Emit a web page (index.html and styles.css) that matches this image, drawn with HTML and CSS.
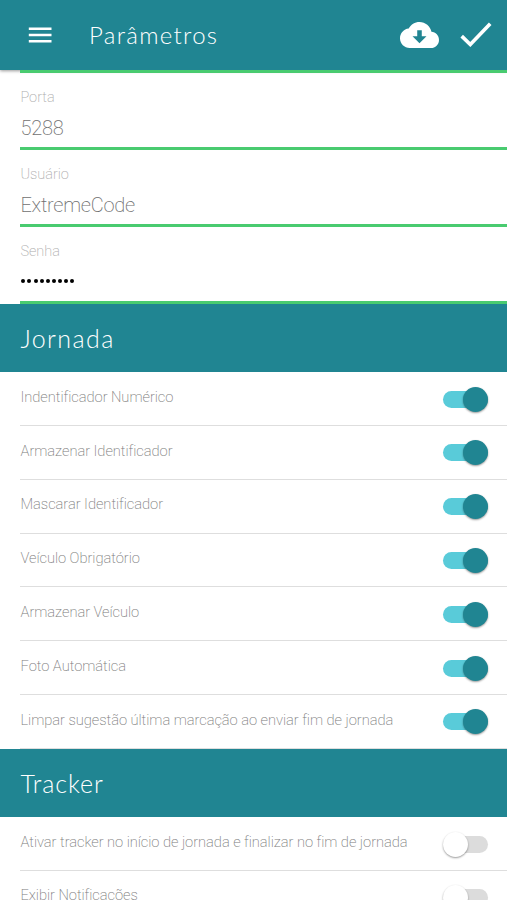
FILE: index.html
```html
<!DOCTYPE html>
<html lang="pt-BR">
<head>
<meta charset="utf-8">
<title>Parâmetros</title>
<link rel="stylesheet" href="styles.css">
</head>
<body>
<header class="toolbar">
  <svg class="menu" viewBox="0 0 24 16"><path d="M0.8 1.7h22.7M0.8 8h22.7M0.8 14.3h22.7" stroke="currentColor" stroke-width="2.5"/></svg>
  <h1 class="title">Parâmetros</h1>
  <svg class="cloud" viewBox="0 4 24 16"><path fill="currentColor" d="M19.35 10.04C18.67 6.59 15.64 4 12 4 9.11 4 6.6 5.64 5.35 8.04 2.34 8.36 0 10.91 0 14c0 3.31 2.69 6 6 6h13c2.76 0 5-2.24 5-5 0-2.64-2.05-4.78-4.65-4.96zM16.3 12.7L12 17.1l-4.3-4.4h2.9V9h2.8v3.7h2.9z"/></svg>
  <svg class="check" viewBox="0 0 32 25"><path d="M1.7 14.1l8.6 8.4L30.2 1.7" fill="none" stroke="currentColor" stroke-width="3.6"/></svg>
</header>
<main>
  <section class="fields">
    <div class="field"><span class="caption">Porta</span><span class="value">5288</span></div>
    <div class="field"><span class="caption">Usuário</span><span class="value">ExtremeCode</span></div>
    <div class="field"><span class="caption">Senha</span><span class="dots"><i></i><i></i><i></i><i></i><i></i><i></i><i></i><i></i><i></i></span></div>
  </section>
  <h2 class="band">Jornada</h2>
  <section class="list">
    <div class="row"><span class="label">Indentificador Numérico</span><span class="switch on"></span></div>
    <div class="row"><span class="label">Armazenar Identificador</span><span class="switch on"></span></div>
    <div class="row"><span class="label">Mascarar Identificador</span><span class="switch on"></span></div>
    <div class="row"><span class="label">Veículo Obrigatório</span><span class="switch on"></span></div>
    <div class="row"><span class="label">Armazenar Veículo</span><span class="switch on"></span></div>
    <div class="row"><span class="label">Foto Automática</span><span class="switch on"></span></div>
    <div class="row"><span class="label">Limpar sugestão última marcação ao enviar fim de jornada</span><span class="switch on"></span></div>
  </section>
  <h2 class="band tracker">Tracker</h2>
  <section class="list">
    <div class="row"><span class="label">Ativar tracker no início de jornada e finalizar no fim de jornada</span><span class="switch"></span></div>
    <div class="row"><span class="label">Exibir Notificações</span><span class="switch"></span></div>
  </section>
</main>
</body>
</html>
```
FILE: styles.css
```css
* { box-sizing: border-box; }
html, body { height: 100%; }
body {
  margin: 0;
  overflow: hidden;
  background: #fff;
  font-family: Roboto, "Liberation Sans", sans-serif;
  font-weight: 200;
}
svg { display: block; flex: none; }
.toolbar {
  height: 69.5px;
  display: flex;
  align-items: center;
  padding: 0 15.5px 0 28px;
  background: #208592;
  color: #fff;
  box-shadow: 0 1px 3px rgba(0, 0, 0, .4);
}
.menu { width: 24px; height: 16px; }
.title {
  flex: 1;
  margin: 0 0 0 37px;
  font: 300 24px/30px Lato, sans-serif;
  letter-spacing: 1.3px;
  color: #fff;
}
.cloud { width: 39px; height: 26px; margin-right: 20.5px; }
.check { width: 32px; height: 25px; }
.fields {
  margin-left: 20.4px;
  border-top: 3px solid #49cb70;
  height: 234.5px;
}
.field {
  display: flex;
  flex-direction: column;
  height: 77px;
  padding-top: 16px;
  border-bottom: 3px solid #49cb70;
}
.caption { font-size: 14.5px; line-height: 18px; color: #adadad; }
.value { margin-top: 9px; font-size: 20px; line-height: 24px; letter-spacing: -.25px; color: #707070; }
.dots { display: flex; gap: 2.1px; margin: 18px 0 0 1px; }
.dots i { width: 4px; height: 4px; border-radius: 50%; background: #000; }
.band {
  margin: 0;
  height: 68.3px;
  padding-left: 20.5px;
  background: #208592;
  color: #fff;
  font: 300 25px/69px Lato, sans-serif;
  letter-spacing: 1.4px;
}
.tracker { letter-spacing: .9px; }
.row {
  display: flex;
  align-items: center;
  justify-content: space-between;
  height: 53.8px;
  margin-left: 20px;
  padding: 0 19.5px 0 .5px;
  border-bottom: 1.5px solid #dedede;
}
.label {
  margin-top: -3.8px;
  font-size: 14.7px;
  line-height: 20px;
  letter-spacing: -.045px;
  color: #7c7c7c;
  white-space: nowrap;
}
.switch {
  display: flex;
  align-items: center;
  width: 44.5px;
  height: 17px;
  margin-top: 1px;
  border-radius: 9px;
  background: #dcdcdc;
}
.switch::before {
  content: "";
  width: 25px;
  height: 25px;
  flex: none;
  border-radius: 50%;
  background: #fff;
  box-shadow: 0 1px 2px rgba(0, 0, 0, .4);
}
.switch.on { justify-content: flex-end; background: #59cbd9; }
.switch.on::before { background: #208592; }
```
